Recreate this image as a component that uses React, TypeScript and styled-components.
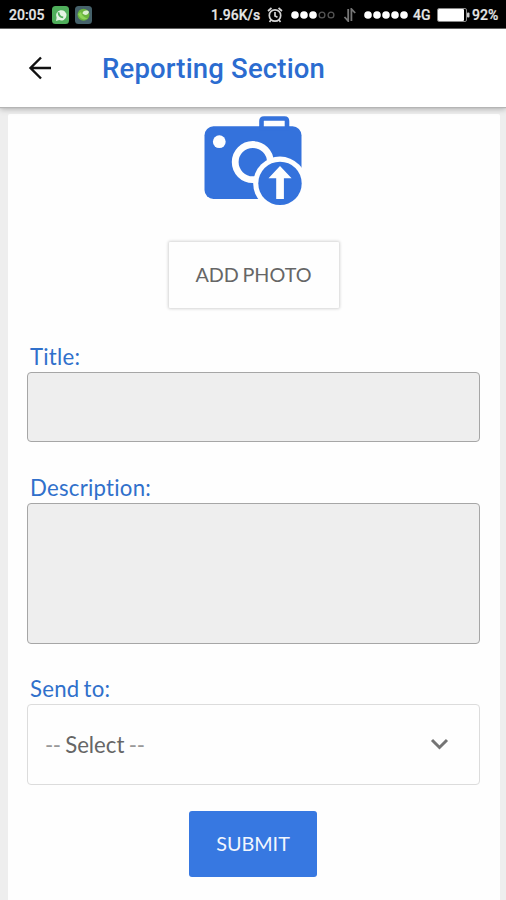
import React from "react";
import styled, { createGlobalStyle } from "styled-components";

const GlobalStyle = createGlobalStyle`
  *, *::before, *::after { box-sizing: border-box; }
  body { margin: 0; background: #eeeeee; }
`;

const Screen = styled.div`
  width: 506px;
  height: 900px;
  display: flex;
  flex-direction: column;
  overflow: hidden;
  background: #eeeeee;
  font-family: Lato, "Liberation Sans", sans-serif;
  font-variant-ligatures: none;
`;

const StatusBar = styled.header`
  flex: none;
  height: 29px;
  padding: 2px 0 0 9px;
  display: flex;
  align-items: center;
  background: #000;
  border-bottom: 1px solid #666;
  color: #e6e6e6;
`;

const StatusItem = styled.span<{ $width: number; $gap?: number }>`
  flex: none;
  display: flex;
  width: ${(p) => p.$width}px;
  margin-left: ${(p) => p.$gap ?? 0}px;
  white-space: nowrap;
  font: 500 14px/18px Roboto, sans-serif;
  -webkit-text-stroke: 0.2px currentColor;

  svg { display: block; }
`;

const AppBar = styled.div`
  flex: none;
  position: relative;
  height: 78px;
  padding: 0 27px;
  display: flex;
  align-items: center;
  gap: 50px;
  background: #fff;
  box-shadow: 0 1px 1px #b5b5b5, 0 2px 6px rgba(0, 0, 0, 0.28);
`;

const BackButton = styled.button`
  display: flex;
  width: 25px;
  height: 26px;
  padding: 0;
  border: 0;
  background: none;
`;

const Heading = styled.h1`
  margin: 2px 0 0;
  color: #2b6cd0;
  font: 500 27.5px/34px Roboto, sans-serif;
  letter-spacing: 0.17px;
`;

const Card = styled.main`
  flex: 1;
  margin: 7px 6px 0 8px;
  padding: 2px 20px 0 19px;
  display: flex;
  flex-direction: column;
  background: #fefefe;
  border-radius: 2px 2px 0 0;
`;

const CameraIcon = styled.svg`
  display: block;
  flex: none;
  align-self: center;
  margin-right: 1px;
`;

const Button = styled.button<{ $primary?: boolean }>`
  flex: none;
  align-self: center;
  width: ${(p) => (p.$primary ? 128 : 170)}px;
  height: 66px;
  margin: ${(p) => (p.$primary ? "26px 1px 0 0" : "36px 0 0 0")};
  padding: 0 0 2px;
  border: 0;
  border-radius: ${(p) => (p.$primary ? 3 : 1)}px;
  background: ${(p) => (p.$primary ? "#3778e1" : "#fefefe")};
  color: ${(p) => (p.$primary ? "#f2f6fd" : "#666")};
  box-shadow: ${(p) => (p.$primary ? "none" : "0 0 3px 1px rgba(0, 0, 0, 0.17)")};
  font: 400 19.8px/24px Lato, sans-serif;
  word-spacing: -1.5px;
`;

const Field = styled.div<{ $top: number }>`
  display: flex;
  flex-direction: column;
  margin-top: ${(p) => p.$top}px;
`;

const Label = styled.label`
  height: 30px;
  padding-left: 3px;
  color: #3070cb;
  font-size: 22.2px;
  line-height: 30px;
  letter-spacing: 0.25px;
  word-spacing: -1.8px;
`;

const Input = styled.div<{ $height: number }>`
  height: ${(p) => p.$height}px;
  border: 1px solid #a6a6a6;
  border-radius: 4px;
  background: #eeeeee;
`;

const Select = styled.div`
  height: 81px;
  padding: 0 30px 0 17px;
  display: flex;
  align-items: center;
  justify-content: space-between;
  border: 1px solid #dcdcdc;
  border-radius: 4px;
  color: #666;
  font-size: 22.2px;
  word-spacing: -1.2px;

  svg { margin-bottom: 2px; }
`;

const Dashes = styled.span`
  color: #999;
  letter-spacing: -0.4px;
`;

function SignalDots({ filled }: { filled: number }) {
  return (
    <svg width="44" height="12" viewBox="0 0 44 12">
      {[0, 1, 2, 3, 4].map((i) =>
        i < filled ? (
          <circle key={i} cx={4 + i * 9} cy="6" r="3.8" fill="#fff" />
        ) : (
          <circle key={i} cx={4 + i * 9} cy="6" r="2.9" fill="none" stroke="#555" strokeWidth="1.3" />
        )
      )}
    </svg>
  );
}

export default function App() {
  return (
    <>
      <GlobalStyle />
      <Screen>
        <StatusBar>
          <StatusItem $width={36}>20:05</StatusItem>
          <StatusItem $width={17} $gap={7}>
            <svg width="17" height="18" viewBox="0 0 17 18">
              <rect width="17" height="18" rx="3.5" fill="#4fae5b" />
              <path d="M4 15l.6-3.3a5.2 5.2 0 1 1 2.5 2.4z" fill="#e3f3e4" />
              <path d="M6.5 6.2c.2 3 2 4.9 4.7 5.1" fill="none" stroke="#4fae5b" strokeWidth="1.8" />
            </svg>
          </StatusItem>
          <StatusItem $width={17} $gap={6}>
            <svg width="17" height="18" viewBox="0 0 17 18">
              <rect width="17" height="18" rx="3.5" fill="#45616a" />
              <circle cx="8.5" cy="8.8" r="6" fill="#69b33e" />
              <path d="M3 8c2 5 6 7 10 4-3 0-6-2-7-6z" fill="#8bd455" />
              <path d="M7.5 7.5c0-3 5-4 6.5-1.5-1 3-4 4-6.5 1.5z" fill="#dcefd2" />
            </svg>
          </StatusItem>
          <StatusItem $width={50} $gap={119}>1.96K/s</StatusItem>
          <StatusItem $width={16} $gap={6}>
            <svg width="16" height="16" viewBox="0 0 16 16" fill="none" stroke="#d5d5d5" strokeWidth="1.7">
              <circle cx="8" cy="8.5" r="5.7" />
              <path d="M1 4l3.5-3M15 4l-3.5-3M8 5v4l2.5 1.3M4 13l-1.5 2M12 13l1.5 2" />
            </svg>
          </StatusItem>
          <StatusItem $width={44} $gap={8}><SignalDots filled={3} /></StatusItem>
          <StatusItem $width={14} $gap={8}>
            <svg width="14" height="14" viewBox="0 0 14 14" fill="none" stroke="#777" strokeWidth="1.8">
              <path d="M5.2 1v12L1.5 9M8.4 13V1l3.8 4" />
            </svg>
          </StatusItem>
          <StatusItem $width={44} $gap={7}><SignalDots filled={5} /></StatusItem>
          <StatusItem $width={18} $gap={5}>4G</StatusItem>
          <StatusItem $width={33} $gap={6}>
            <svg width="33" height="14" viewBox="0 0 33 14">
              <rect x=".5" y=".5" width="29" height="13" rx="1.5" fill="none" stroke="#888" />
              <rect x="1" y="1" width="26" height="12" rx="1" fill="#fff" />
              <rect x="30" y="4.5" width="2.5" height="5" rx="1" fill="#ccc" />
            </svg>
          </StatusItem>
          <StatusItem $width={26} $gap={2}>92%</StatusItem>
        </StatusBar>

        <AppBar>
          <BackButton aria-label="Back">
            <svg width="25" height="26" viewBox="0 0 25 26" fill="none" stroke="#111" strokeWidth="2.4">
              <path d="M24 13H3M14 2.5L3.5 13L14 23.5" />
            </svg>
          </BackButton>
          <Heading>Reporting Section</Heading>
        </AppBar>

        <Card>
          <CameraIcon width="98" height="90" viewBox="204 116 98 90">
            <rect x="204.5" y="126.3" width="97" height="72.7" rx="9" fill="#3472dc" />
            <path d="M261.5 128v-7q0-2.5 2.5-2.5h20.5q2.5 0 2.5 2.5v7" fill="#fefefe" stroke="#3472dc" strokeWidth="4.6" />
            <rect x="259.2" y="126.3" width="30" height="4" fill="#3472dc" />
            <circle cx="219.3" cy="141.7" r="6.4" fill="#fefefe" />
            <circle cx="252.8" cy="162.1" r="17.6" fill="none" stroke="#fefefe" strokeWidth="6.8" />
            <circle cx="280" cy="183.4" r="26.8" fill="#fefefe" />
            <circle cx="280" cy="183.4" r="21.7" fill="#3472dc" />
            <path d="M280 166l11.6 12.3h-7.7V199h-7.7v-20.7h-7.7z" fill="#fefefe" />
          </CameraIcon>
          <Button type="button">ADD PHOTO</Button>
          <Field $top={34}>
            <Label>Title:</Label>
            <Input $height={70} role="textbox" />
          </Field>
          <Field $top={31}>
            <Label>Description:</Label>
            <Input $height={141} role="textbox" />
          </Field>
          <Field $top={30}>
            <Label>Send to:</Label>
            <Select role="combobox">
              <span>
                <Dashes>--</Dashes> Select <Dashes>--</Dashes>
              </span>
              <svg width="19" height="12" viewBox="0 0 19 12" fill="none" stroke="#747474" strokeWidth="3">
                <path d="M2 2l7.5 7.5L17 2" />
              </svg>
            </Select>
          </Field>
          <Button type="button" $primary>SUBMIT</Button>
        </Card>
      </Screen>
    </>
  );
}
